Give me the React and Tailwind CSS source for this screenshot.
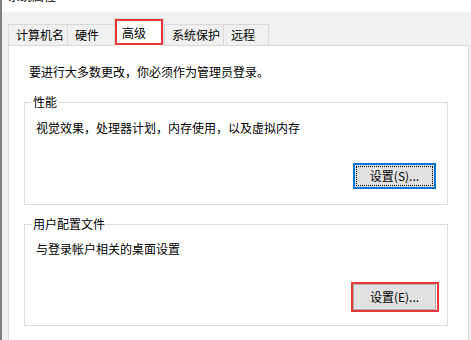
import React from 'react';

const font = { fontFamily: '"Noto Sans CJK SC", "Microsoft YaHei", sans-serif' };

const tabs = [
  { label: '计算机名', w: 'w-[60px]' },
  { label: '硬件', w: 'w-[48px]' },
  { label: '高级', w: 'w-[50px]', active: true },
  { label: '系统保护', w: 'w-[60px]' },
  { label: '远程', w: 'w-[46px]' },
];

function Tab({ label, w, active }) {
  if (active) {
    return (
      <div className={`relative ${w} h-[28px] bg-white border-x border-t border-[#d9d9d9] -mb-px flex items-center pl-[7px] z-10`}>
        <span>{label}</span>
        {/* 红框标注 */}
        <div className="absolute left-0 top-0 w-[48px] h-[26px] border-2 border-[#e53935]" />
      </div>
    );
  }
  return (
    <div className={`${w} h-[21px] bg-[#f0f0f0] border-l border-t border-r border-[#d9d9d9] -mr-px flex items-center pl-[7px]`}>
      <span>{label}</span>
    </div>
  );
}

function SettingsButton({ label, focused, marked }) {
  return (
    <div className="relative w-[83px] h-[26px]">
      {focused ? (
        <button className="w-full h-full bg-[#e1e1e1] border-2 border-[#0078d7] p-px flex">
          <span className="flex-1 border border-dotted border-black flex items-center justify-center">{label}</span>
        </button>
      ) : (
        <button className="w-full h-full bg-[#e1e1e1] border border-[#adadad] flex items-center justify-center">{label}</button>
      )}
      {marked && <div className="absolute -left-[2px] -top-[2px] -right-[3px] -bottom-[2px] border-2 border-[#e53935]" />}
    </div>
  );
}

function Group({ title, children, className = '' }) {
  return (
    <fieldset className={`w-[424px] ml-[15px] border border-[#dcdcdc] ${className}`}>
      <legend className="ml-[7px] px-[1px] leading-[16px]">{title}</legend>
      {children}
    </fieldset>
  );
}

export default function App() {
  return (
    <div className="w-[471px] h-[340px] overflow-hidden bg-[#f0f0f0] border-l-2 border-[#808080] text-[12px] leading-[16px] text-black" style={font}>
      {/* 标题栏（被裁切） */}
      <div className="h-[12px] bg-white overflow-hidden">
        <p className="-mt-[12px] pl-[6px] leading-[16px]">系统属性</p>
      </div>

      {/* 选项卡 */}
      <div className="h-[33px] pl-[6px] flex items-end">
        {tabs.map((t) => (
          <Tab key={t.label} {...t} />
        ))}
      </div>

      {/* 面板 */}
      <div className="ml-[6px] w-[461px] h-[300px] bg-white border border-[#d9d9d9]">
        <p className="pt-[18px] pl-[20px]">要进行大多数更改，你必须作为管理员登录。</p>

        <Group title="性能" className="mt-[14px]">
          <p className="pt-[10px] pl-[11px]">视觉效果，处理器计划，内存使用，以及虚拟内存</p>
          <div className="flex justify-end pr-[11px] pt-[27px] pb-[15px]">
            <SettingsButton label="设置(S)..." focused />
          </div>
        </Group>

        <Group title="用户配置文件" className="mt-[11px]">
          <p className="pt-[9px] pl-[11px]">与登录帐户相关的桌面设置</p>
          <div className="flex justify-end pr-[11px] pt-[27px] pb-[15px]">
            <SettingsButton label="设置(E)..." marked />
          </div>
        </Group>

        <Group title="启动和故障恢复" className="mt-[13px]">
          <p className="pt-[9px] pl-[11px]">系统启动、系统故障和调试信息</p>
        </Group>
      </div>
    </div>
  );
}
